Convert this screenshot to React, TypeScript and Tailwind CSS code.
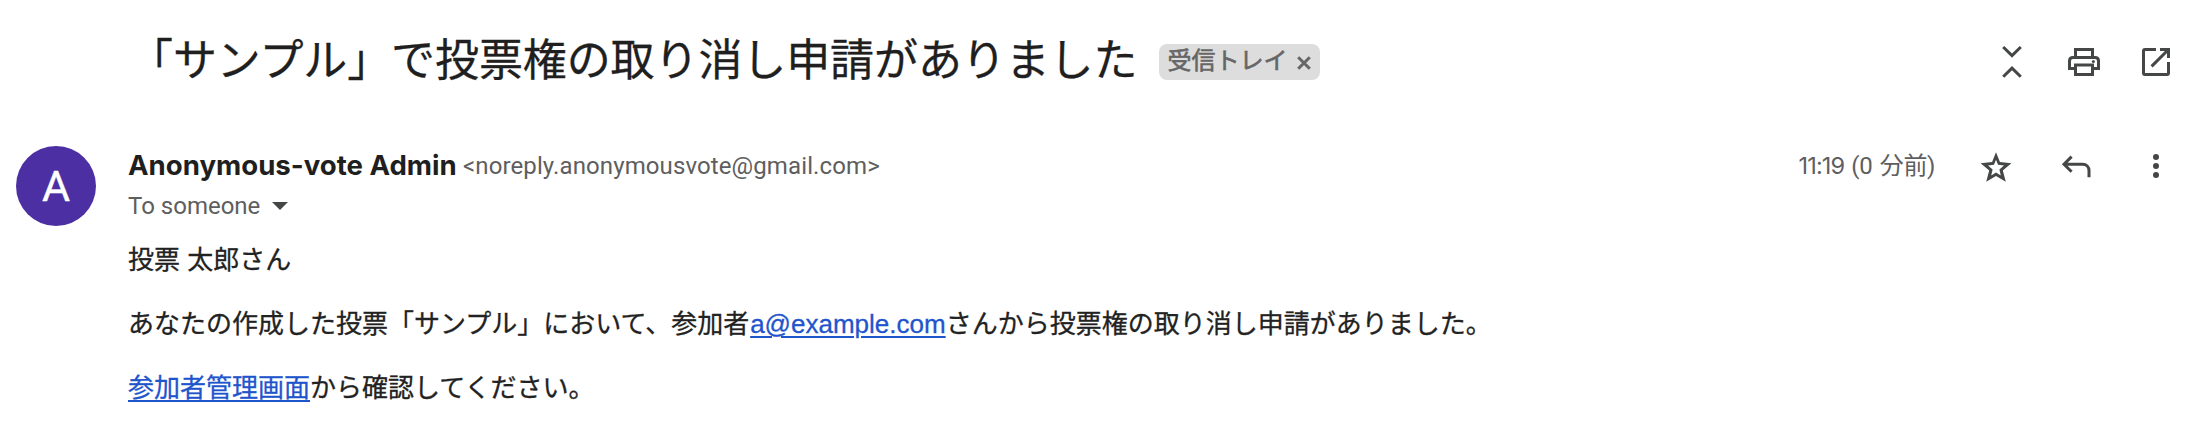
import type { ReactNode } from "react";

function Icon({ children }: { children: ReactNode }) {
  return (
    <svg viewBox="0 0 20 20" className="size-10 shrink-0" fill="none" stroke="#444746" strokeWidth="1.5">
      {children}
    </svg>
  );
}

function CollapseIcon() {
  return (
    <Icon>
      <path d="M5.6 2.5 10 6.8l4.4-4.3M5.6 17.4 10 13.1l4.4 4.3" />
    </Icon>
  );
}

function PrintIcon() {
  return (
    <Icon>
      <path d="M5.75 7.5V3.75h8.5V7.5M5.5 13.25H2.75V9.5c0-1.1.65-1.75 1.75-1.75h11c1.1 0 1.75.65 1.75 1.75v3.75H14.5M5.75 11.5h8.5v4.75h-8.5z" />
      <circle cx="14.7" cy="9.7" r="0.75" fill="#444746" stroke="none" />
    </Icon>
  );
}

function OpenIcon() {
  return (
    <Icon>
      <path d="M10 3.75H4.5a.75.75 0 0 0-.75.75v11c0 .42.33.75.75.75h11c.42 0 .75-.33.75-.75V10M12 3.75h4.25V8M16.25 3.75 7.8 12.2" />
    </Icon>
  );
}

function StarIcon() {
  return (
    <Icon>
      <path
        fill="#444746"
        stroke="none"
        fillRule="evenodd"
        d="M10 3.1 11.95 8 17.7 8.65 13.4 12.2 14.9 17.9 10 15 5.1 17.9 6.6 12.2 2.3 8.65 8.05 8zM10 6.9 11 9.4 14 9.8 11.7 11.7 12.4 14.7 10 13.2 7.6 14.7 8.3 11.7 6 9.8 9 9.4z"
      />
    </Icon>
  );
}

function ReplyIcon() {
  return (
    <Icon>
      <path d="M7.8 5.3 4 9.1l3.8 3.8M4 9.1h9.3c1.9 0 3.2 1.3 3.2 3.2v3.3" />
    </Icon>
  );
}

function MoreIcon() {
  return (
    <Icon>
      <g fill="#444746" stroke="none">
        <circle cx="10" cy="5.5" r="1.5" />
        <circle cx="10" cy="10" r="1.5" />
        <circle cx="10" cy="14.5" r="1.5" />
      </g>
    </Icon>
  );
}

export default function App() {
  return (
    <main className="flex h-[438px] w-full flex-col bg-white font-['Roboto','Noto_Sans_CJK_JP',sans-serif] text-[#1f1f1f]">
      <header className="flex h-[124px] items-center pr-[30px] pl-[129px]">
        <h1 className="-mt-2.5 font-['Noto_Sans_CJK_JP',sans-serif] text-[44px] leading-[60px] tracking-[-0.1px] whitespace-nowrap [-webkit-text-stroke:0.3px]">
          「サンプル」で投票権の取り消し申請がありました
        </h1>
        <div className="ml-[22px] flex h-9 w-[161px] items-center rounded-lg bg-[#ddd] pl-2 text-[#666]">
          <span className="-mt-0.5 text-[24px] leading-9 whitespace-nowrap [-webkit-text-stroke:0.6px]">受信トレイ</span>
          <svg viewBox="0 0 14 14" className="mt-0.5 ml-[10px] size-3.5 shrink-0" stroke="#666" strokeWidth="3">
            <path d="m1.2 1.2 11.6 11.6M12.8 1.2 1.2 12.8" />
          </svg>
        </div>
        <div className="ml-auto flex gap-8">
          <CollapseIcon />
          <PrintIcon />
          <OpenIcon />
        </div>
      </header>

      <section className="flex pr-[30px] pl-4">
        <div className="mt-[22px] flex size-20 shrink-0 items-center justify-center rounded-full bg-[#4c2fa2] text-[43px] text-white [-webkit-text-stroke:0.4px]">
          A
        </div>
        <div className="ml-8 grow">
          <div className="flex h-[84px] items-center">
            <span className="w-[328px] font-['Inter',sans-serif] text-[27.6px] font-bold whitespace-nowrap">
              Anonymous-vote Admin
            </span>
            <span className="ml-[7px] text-[24px] tracking-[0.11px] text-[#5e5e5e]">
              &lt;noreply.anonymousvote@gmail.com&gt;
            </span>
            <div className="ml-auto flex items-center">
              <span className="mr-[41px] flex items-baseline gap-[7px] text-[24px] text-[#5e5e5e]">
                <span className="font-['Inter',sans-serif] text-[23.5px] tracking-[-0.9px]">11:19</span>
                <span>(0</span>
                <span className="tracking-[-0.4px]">分前)</span>
              </span>
              <div className="flex gap-10">
                <StarIcon />
                <ReplyIcon />
                <MoreIcon />
              </div>
            </div>
          </div>
          <div className="-mt-[18px] flex items-center text-[24px] leading-8 text-[#5e5e5e]">
            To someone
            <svg viewBox="0 0 16 8" className="ml-3 h-2 w-4" fill="#444746">
              <path d="M0 0h16L8 8z" />
            </svg>
          </div>
          <div className="mt-[19px] flex flex-col gap-[26px] font-['Liberation_Sans','Noto_Sans_CJK_JP',sans-serif] text-[26px] leading-[38px] whitespace-nowrap text-[#222] [-webkit-text-stroke:0.3px]">
            <p>投票 太郎さん</p>
            <p>
              あなたの作成した投票「サンプル」において、参加者
              <a className="ml-px text-[#1f55cc] underline decoration-2 underline-offset-[3px]">a@example.com</a>
              さんから投票権の取り消し申請がありました。
            </p>
            <p>
              <a className="text-[#1f55cc] underline decoration-2 underline-offset-[3px]">参加者管理画面</a>
              から確認してください。
            </p>
          </div>
        </div>
      </section>
    </main>
  );
}
